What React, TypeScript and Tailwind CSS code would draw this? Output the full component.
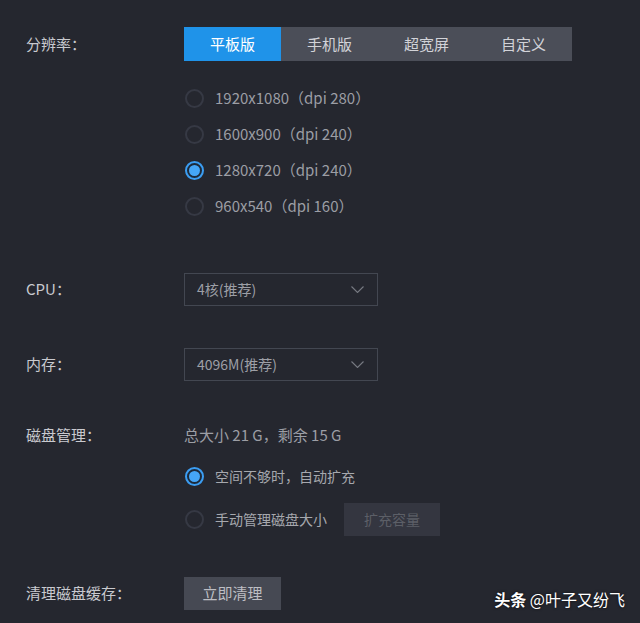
import React, { useState } from 'react'

const FONT = { fontFamily: '"Noto Sans CJK SC", "Noto Sans", sans-serif' }

const tabs = ['平板版', '手机版', '超宽屏', '自定义']
const resolutions = [
  '1920x1080（dpi 280）',
  '1600x900（dpi 240）',
  '1280x720（dpi 240）',
  '960x540（dpi 160）',
]

function Radio({ checked }: { checked: boolean }) {
  return checked ? (
    <span className="flex h-[19px] w-[19px] items-center justify-center rounded-full border-2 border-[#3b9df2] bg-[#1d2a3a]">
      <span className="h-[11px] w-[11px] rounded-full bg-[#45a6f7]" />
    </span>
  ) : (
    <span className="h-[19px] w-[19px] rounded-full border-2 border-[#363944]" />
  )
}

function Select({ value }: { value: string }) {
  return (
    <div className="flex h-[33px] w-[194px] items-center justify-between border border-[#434751] pl-[12px] pr-[13px] text-[14px] text-[#9d9fa6]">
      <span>{value}</span>
      <svg width="13" height="7" viewBox="0 0 13 7" fill="none">
        <path d="M0.5 0.5l6 6 6-6" stroke="#777a83" strokeWidth="1.1" />
      </svg>
    </div>
  )
}

function Label({ children }: { children: React.ReactNode }) {
  return <div className="w-[158px] shrink-0 text-[15px] text-[#c9cacf]">{children}</div>
}

export default function App() {
  const [tab, setTab] = useState(0)
  const [res, setRes] = useState(2)
  const [disk, setDisk] = useState(0)

  return (
    <div className="relative h-[623px] w-[640px] overflow-hidden bg-[#25272f] pl-[26px]" style={FONT}>
      {/* resolution */}
      <div className="flex items-center pt-[27px]">
        <Label>分辨率：</Label>
        <div className="flex h-[34px] bg-[#4b4e58]">
          {tabs.map((t, i) => (
            <button
              key={t}
              onClick={() => setTab(i)}
              className={`w-[97px] text-[15px] ${i === tab ? 'bg-[#1f93e9] text-white' : 'text-[#d2d3d8]'}`}
            >
              {t}
            </button>
          ))}
        </div>
      </div>
      <div className="mt-[19px] flex flex-col pl-[158px]">
        {resolutions.map((r, i) => (
          <div
            key={r}
            onClick={() => setRes(i)}
            className="flex h-[36px] cursor-pointer items-center gap-[11px] pl-[1px] text-[15px] text-[#9c9ea5]"
          >
            <Radio checked={i === res} />
            <span>{r}</span>
          </div>
        ))}
      </div>

      {/* cpu */}
      <div className="mt-[49px] flex items-center">
        <Label>CPU：</Label>
        <Select value="4核(推荐)" />
      </div>

      {/* memory */}
      <div className="mt-[42px] flex items-center">
        <Label>内存：</Label>
        <Select value="4096M(推荐)" />
      </div>

      {/* disk */}
      <div className="mt-[43px] flex items-center">
        <Label>磁盘管理：</Label>
        <span className="text-[15px] text-[#9c9ea5]">总大小 21 G，剩余 15 G</span>
      </div>
      <div className="mt-[13px] flex flex-col gap-[10px] pl-[158px]">
        <div onClick={() => setDisk(0)} className="flex h-[33px] cursor-pointer items-center gap-[11px] pl-[1px] text-[14px] text-[#a6a8ae]">
          <Radio checked={disk === 0} />
          <span>空间不够时，自动扩充</span>
        </div>
        <div className="flex h-[33px] items-center">
          <div onClick={() => setDisk(1)} className="flex cursor-pointer items-center gap-[11px] pl-[1px] text-[14px] text-[#a6a8ae]">
            <Radio checked={disk === 1} />
            <span>手动管理磁盘大小</span>
          </div>
          <button className="ml-[17px] h-[33px] w-[96px] bg-[#343640] text-[14px] text-[#5c5f67]">扩充容量</button>
        </div>
      </div>

      {/* clean */}
      <div className="mt-[41px] flex items-center">
        <Label>清理磁盘缓存：</Label>
        <button className="h-[33px] w-[97px] bg-[#464953] text-[15px] text-[#bdbec3]">立即清理</button>
      </div>

      {/* watermark */}
      <div className="absolute bottom-[12px] right-[15px] text-[16px] text-white [text-shadow:0_0_3px_rgba(0,0,0,0.8)]">
        <span className="font-bold">头条</span> @叶子又纷飞
      </div>
    </div>
  )
}
